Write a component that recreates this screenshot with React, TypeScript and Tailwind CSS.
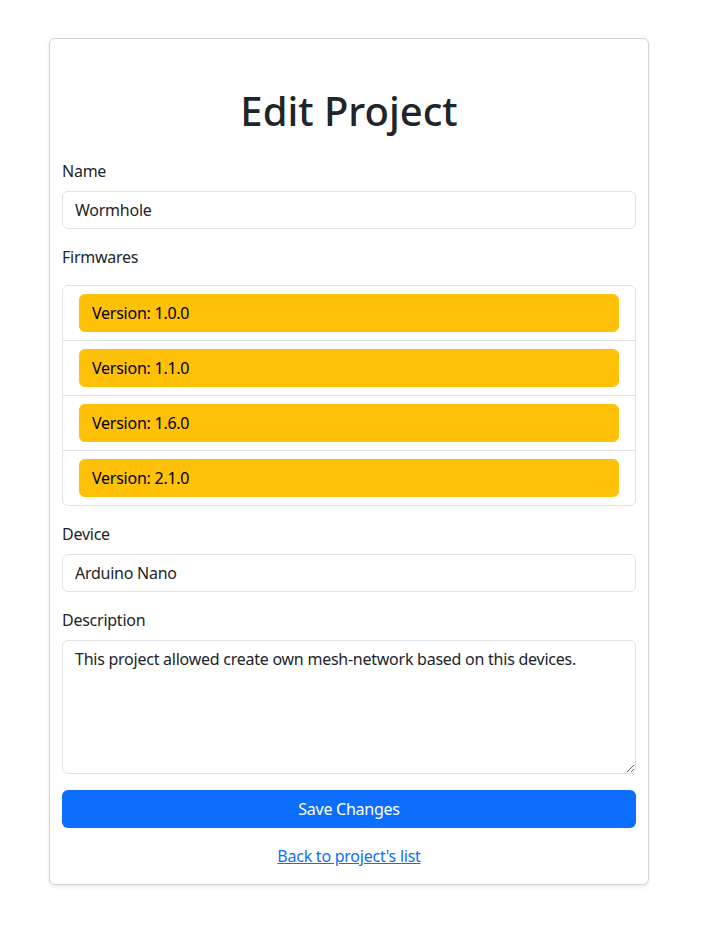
import React from "react";

const font = { fontFamily: '"Noto Sans", "Open Sans", sans-serif', letterSpacing: "-0.25px" };

export default function App() {
  const versions = ["1.0.0", "1.1.0", "1.6.0", "2.1.0"];
  return (
    <div className="min-h-[930px] bg-white pt-[38px]" style={font}>
      <div className="ml-[49px] w-[600px] rounded-[6px] border border-[#d3d3d4] bg-white p-3 pb-4 text-[16px] leading-[24px] text-[#212529] shadow-[0_2px_4px_rgba(0,0,0,0.075)]">
        <h1 className="mt-[36px] mb-[24px] text-center text-[40px] font-medium leading-[48px] tracking-[0px]">Edit Project</h1>
        <div className="mb-4">
          <label className="mb-2 block">Name</label>
          <input
            defaultValue="Wormhole"
            className="block h-[38px] w-full rounded-[6px] border border-[#dee2e6] px-3 text-[16px] text-[#212529] outline-none"
            style={font}
          />
        </div>
        <div className="mb-4">
          <label className="mb-2 block">Firmwares</label>
          <div className="mt-4 rounded-[6px] border border-[#dee2e6]">
            {versions.map((v, i) => (
              <div key={v} className={`px-4 py-2 ${i > 0 ? "border-t border-[#dee2e6]" : ""}`}>
                <div className="h-[38px] rounded-[6px] border border-[#ffc107] bg-[#ffc107] px-3 py-[6px] text-left text-black">
                  Version: {v}
                </div>
              </div>
            ))}
          </div>
        </div>
        <div className="mb-4">
          <label className="mb-2 block">Device</label>
          <input
            defaultValue="Arduino Nano"
            className="block h-[38px] w-full rounded-[6px] border border-[#dee2e6] px-3 text-[16px] text-[#212529] outline-none"
            style={font}
          />
        </div>
        <div className="mb-4">
          <label className="mb-2 block">Description</label>
          <textarea
            defaultValue="This project allowed create own mesh-network based on this devices."
            className="block h-[134px] w-full rounded-[6px] border border-[#dee2e6] px-3 py-[6px] text-[16px] leading-[24px] text-[#212529] outline-none"
            style={font}
          />
        </div>
        <button className="block h-[38px] w-full rounded-[6px] bg-[#0d6efd] text-[16px] text-white" style={font}>
          Save Changes
        </button>
        <div className="mt-4 text-center">
          <a href="#" className="text-[#0d6efd] underline">Back to project's list</a>
        </div>
      </div>
    </div>
  );
}
